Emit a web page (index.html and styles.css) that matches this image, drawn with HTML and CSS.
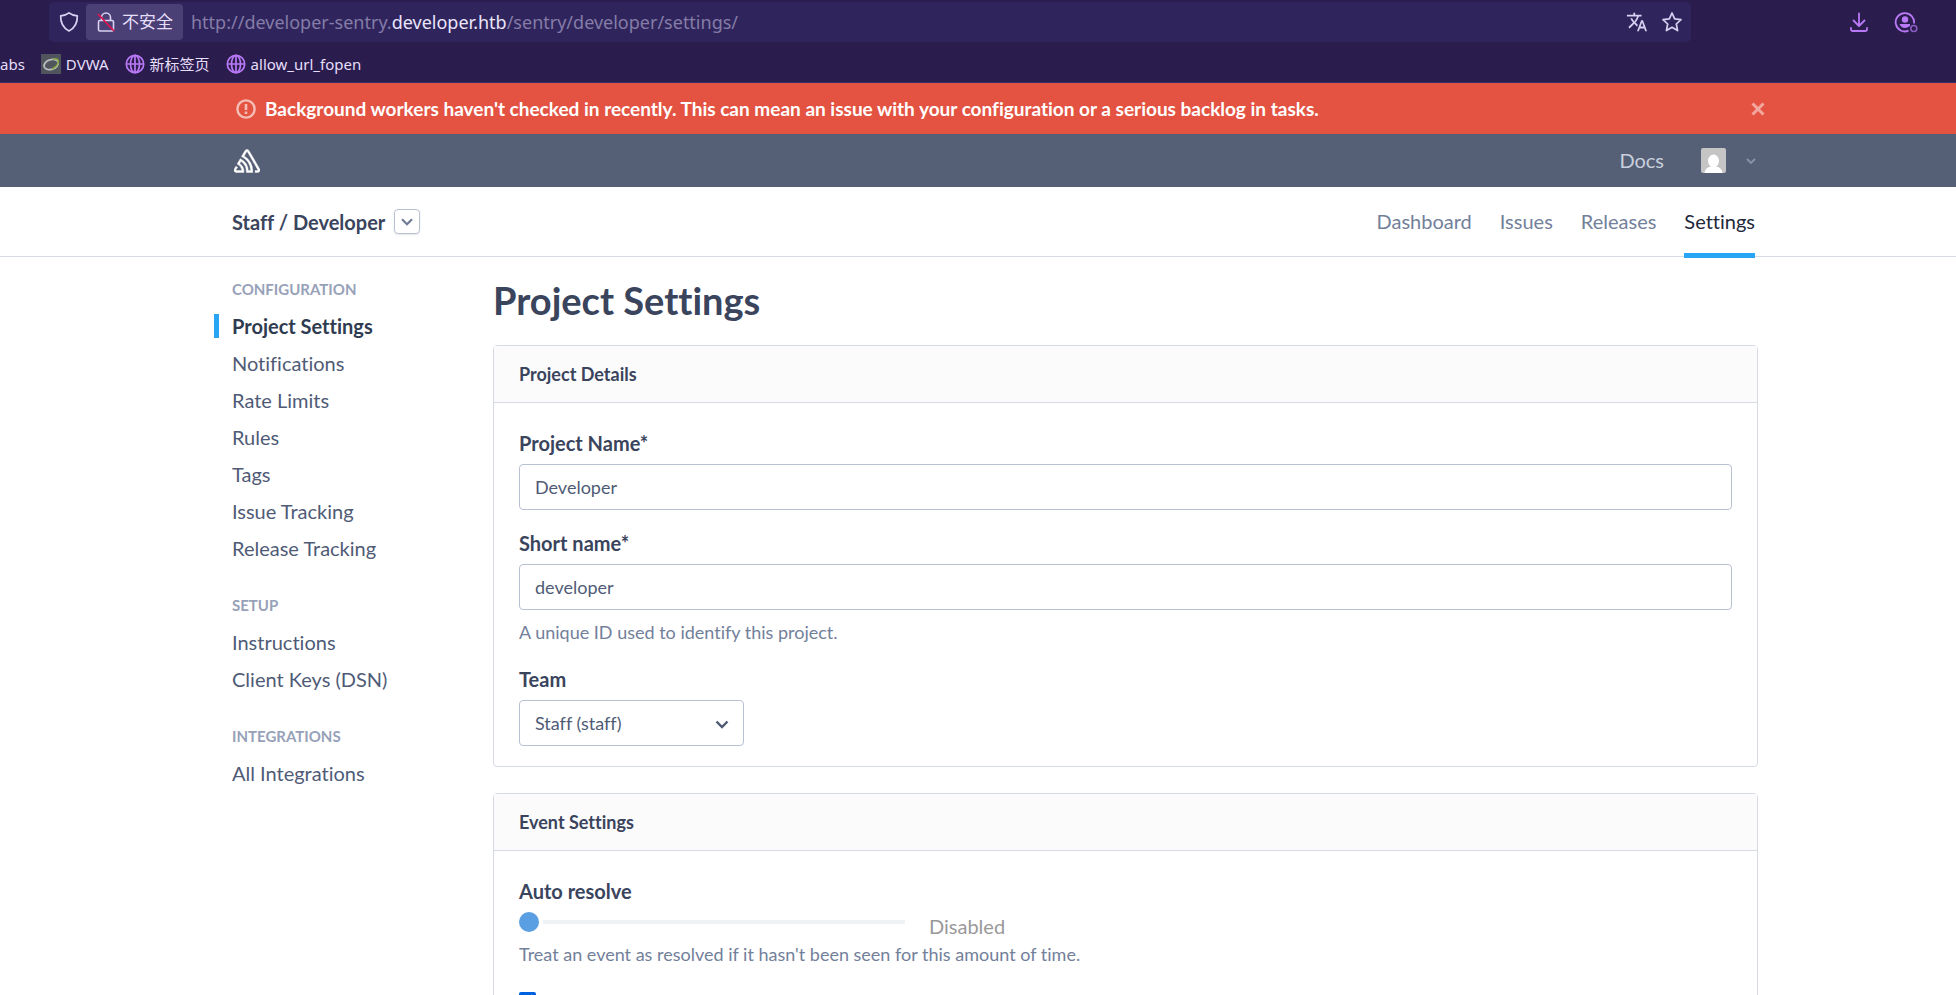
FILE: index.html
```html
<!DOCTYPE html>
<html lang="en">
<head>
<meta charset="utf-8">
<title>Project Settings</title>
<link rel="stylesheet" href="styles.css">
</head>
<body>
<div class="browser">
  <div class="toolbar">
    <div class="urlbar">
      <svg class="shield" width="20" height="22" viewBox="0 0 20 22"><path d="M10 1.800 Q13 4.300 18.300 4.800 Q18.800 15.500 10 20 Q1.200 15.500 1.700 4.800 Q7 4.300 10 1.800 Z" fill="none" stroke="#d9d0f2" stroke-width="1.700" stroke-linejoin="round"/></svg>
      <button class="insecure" type="button">
        <svg width="18" height="22" viewBox="0 0 18 22" fill="none"><path d="M4.500 9 V6.500 A4.500 4.500 0 0 1 13.500 6.500 V9 M3 9.500 H15 Q16.500 9.500 16.500 11 V18.500 Q16.500 20 15 20 H3 Q1.500 20 1.500 18.500 V11 Q1.500 9.500 3 9.500 Z" stroke="#d9d0f2" stroke-width="1.600"/><path d="M1 3 L17 20" stroke="#e0124f" stroke-width="1.800"/></svg>
        <span>不安全</span>
      </button>
      <span class="url">http://developer-sentry.<b>developer.htb</b>/sentry/developer/settings/</span>
      <button class="tool" type="button" aria-label="Translate"><svg width="22" height="22" viewBox="0 0 24 24" fill="#d9d0f2"><path d="M12.870 15.070l-2.540-2.510.03-.03A17.520 17.520 0 0 0 14.070 6H17V4h-7V2H8v2H1v2h11.170C11.500 7.920 10.440 9.750 9 11.350 8.070 10.320 7.300 9.190 6.690 8h-2c.73 1.630 1.730 3.170 2.980 4.560l-5.090 5.020L4 19l5-5 3.110 3.110.76-2.040zM18.500 10h-2L12 22h2l1.120-3h4.750L21 22h2l-4.500-12zm-2.620 7l1.620-4.330L19.120 17h-3.240z"/></svg></button>
      <button class="tool" type="button" aria-label="Bookmark"><svg width="22" height="22" viewBox="0 0 22 22"><path d="M11 2 L13.700 7.900 L20 8.600 L15.300 13 L16.600 19.600 L11 16.300 L5.400 19.600 L6.700 13 L2 8.600 L8.300 7.900 Z" fill="none" stroke="#d9d0f2" stroke-width="1.700" stroke-linejoin="round"/></svg></button>
    </div>
    <div class="actions">
      <button class="tool" type="button" aria-label="Downloads"><svg width="18" height="22" viewBox="0 0 18 22" fill="none" stroke="#b978f5" stroke-width="1.800" stroke-linecap="round" stroke-linejoin="round"><path d="M9 2.500 V14.500 M3.500 9.500 L9 15 L14.500 9.500 M1 17 V18.500 Q1 20 2.500 20 H15.500 Q17 20 17 18.500 V17"/></svg></button>
      <button class="tool" type="button" aria-label="Account"><svg width="24" height="22" viewBox="0 0 24 22" fill="none"><path d="M20 12.500 A9.200 9.200 0 1 0 14.500 19.700" stroke="#b978f5" stroke-width="1.800"/><circle cx="11" cy="8.500" r="3.200" fill="#b978f5"/><path d="M5.500 13 H16 V15 Q13 17 11 17 Q7 17 5.500 13 Z" fill="#b978f5"/><circle cx="19.800" cy="17.500" r="3" stroke="#8d5cc4" stroke-width="1.600"/></svg></button>
    </div>
  </div>
  <nav class="bookmarks">
    <a href="#">abs</a>
    <a href="#"><svg width="20" height="20" viewBox="0 0 20 20"><rect width="20" height="20" fill="#50545c"/><ellipse cx="10" cy="10.500" rx="7.300" ry="4.800" transform="rotate(-18 10 10)" fill="none" stroke="#b9bdbd" stroke-width="1.800"/><path d="M12 5 Q19 4 17 9.500 Q15 13.500 11 15" fill="none" stroke="#7fa23c" stroke-width="1.500"/></svg>DVWA</a>
    <a href="#"><svg width="20" height="20" viewBox="0 0 20 20" fill="none" stroke="#b978f5" stroke-width="1.700"><circle cx="10" cy="10" r="8.700"/><ellipse cx="10" cy="10" rx="4.500" ry="8.700"/><path d="M1 10 H19 M10 1 V19"/></svg>新标签页</a>
    <a href="#"><svg width="20" height="20" viewBox="0 0 20 20" fill="none" stroke="#b978f5" stroke-width="1.700"><circle cx="10" cy="10" r="8.700"/><ellipse cx="10" cy="10" rx="4.500" ry="8.700"/><path d="M1 10 H19 M10 1 V19"/></svg>allow_url_fopen</a>
  </nav>
</div>

<div class="alert band" role="alert">
  <svg width="20" height="20" viewBox="0 0 20 20" fill="none"><circle cx="10" cy="10" r="8.600" stroke="#f4bdb5" stroke-width="2.400"/><path d="M10 5 V11 M10 12.500 V15" stroke="#f4bdb5" stroke-width="2.600"/></svg>
  <strong>Background workers haven't checked in recently. This can mean an issue with your configuration or a serious backlog in tasks.</strong>
  <button type="button" class="close" aria-label="Close"><svg width="14" height="14" viewBox="0 0 14 14"><path d="M1.500 1.500 L12.500 12.500 M12.500 1.500 L1.500 12.500" stroke="#f2a89e" stroke-width="3"/></svg></button>
</div>

<header class="topnav band">
  <a href="#" class="logo" aria-label="Sentry"><svg width="26" height="26" viewBox="0 0 24 24" fill="#fff" stroke="#fff" stroke-width=".4"><path d="M13.910 2.505c-.873-1.448-2.972-1.448-3.844 0L6.904 7.920a15.478 15.478 0 0 1 8.530 12.811h-2.221A13.301 13.301 0 0 0 5.784 9.814l-2.926 5.060a7.650 7.650 0 0 1 4.435 5.848H2.194a.365.365 0 0 1-.298-.534l1.413-2.402a5.160 5.160 0 0 0-1.614-.913L.296 19.275a2.182 2.182 0 0 0 .812 2.999 2.240 2.240 0 0 0 1.086.288h6.983a9.322 9.322 0 0 0-3.845-8.318l1.110-1.922a11.470 11.470 0 0 1 4.950 10.240h5.915a17.242 17.242 0 0 0-7.885-15.280l2.244-3.845a.370.370 0 0 1 .504-.130c.255.140 9.750 16.708 9.928 16.900a.365.365 0 0 1-.327.543h-2.287c.029.612.029 1.223 0 1.831h2.297a2.206 2.206 0 0 0 1.922-3.310z"/></svg></a>
  <a href="#" class="docs">Docs</a>
  <button type="button" class="user" aria-label="Account menu">
    <svg width="25" height="25" viewBox="0 0 25 25"><rect width="25" height="25" rx="2" fill="#c5c5c5"/><ellipse cx="12.500" cy="13" rx="5.500" ry="6.500" fill="#fff"/><path d="M3.500 25 Q4 19.500 10 18.500 H15 Q21 19.500 21.500 25 Z" fill="#fff"/></svg>
    <svg width="10" height="6" viewBox="0 0 10 6"><path d="M1 1 L5 5 L9 1" fill="none" stroke="#8a93a6" stroke-width="1.800"/></svg>
  </button>
</header>

<div class="subnav band">
  <h2>Staff / Developer</h2>
  <button type="button" class="switch" aria-label="Switch project"><svg width="12" height="8" viewBox="0 0 12 8"><path d="M1 1.300 L6 6.300 L11 1.300" fill="none" stroke="#6f7b94" stroke-width="2.200"/></svg></button>
  <nav class="tabs">
    <a href="#">Dashboard</a>
    <a href="#">Issues</a>
    <a href="#">Releases</a>
    <a href="#" class="active">Settings</a>
  </nav>
</div>

<div class="page band">
  <nav class="sidebar">
    <h6>CONFIGURATION</h6>
    <ul>
      <li class="active"><a href="#">Project Settings</a></li>
      <li><a href="#">Notifications</a></li>
      <li><a href="#">Rate Limits</a></li>
      <li><a href="#">Rules</a></li>
      <li><a href="#">Tags</a></li>
      <li><a href="#">Issue Tracking</a></li>
      <li><a href="#">Release Tracking</a></li>
    </ul>
    <h6>SETUP</h6>
    <ul>
      <li><a href="#">Instructions</a></li>
      <li><a href="#">Client Keys (DSN)</a></li>
    </ul>
    <h6>INTEGRATIONS</h6>
    <ul>
      <li><a href="#">All Integrations</a></li>
    </ul>
  </nav>
  <main>
    <h1>Project Settings</h1>
    <section class="panel">
      <h3>Project Details</h3>
      <div class="body">
        <div class="field">
          <label for="name">Project Name*</label>
          <input id="name" type="text" value="Developer">
        </div>
        <div class="field">
          <label for="slug">Short name*</label>
          <input id="slug" type="text" value="developer">
          <p class="help">A unique ID used to identify this project.</p>
        </div>
        <div class="field">
          <label for="team">Team</label>
          <span class="select">
            <select id="team"><option>Staff (staff)</option></select>
            <svg width="14" height="9" viewBox="0 0 14 9"><path d="M1.500 1.500 L7 7 L12.500 1.500" fill="none" stroke="#4e5a73" stroke-width="2.400"/></svg>
          </span>
        </div>
      </div>
    </section>
    <section class="panel">
      <h3>Event Settings</h3>
      <div class="body">
        <div class="field">
          <label for="age">Auto resolve</label>
          <div class="slider">
            <input id="age" type="range" min="0" max="100" value="0">
            <output for="age">Disabled</output>
          </div>
          <p class="help">Treat an event as resolved if it hasn't been seen for this amount of time.</p>
        </div>
        <div class="check"><input id="scrub" type="checkbox" checked aria-label="Data scrubber"></div>
      </div>
    </section>
  </main>
</div>
</body>
</html>
```
FILE: styles.css
```css
* { box-sizing: border-box; }
html { overflow: hidden; }
body {
  margin: 0;
  height: 100vh;
  overflow: hidden;
  background: #fff;
  color: #4f5b76;
  font: 20px/28px Lato, "Noto Sans CJK SC", sans-serif;
  font-variant-ligatures: none;
}
a { color: inherit; text-decoration: none; }
button { border: 0; padding: 0; background: none; color: inherit; font: inherit; display: flex; align-items: center; }
h1, h2, h3, h6, p, ul { margin: 0; padding: 0; }
ul { list-style: none; }
svg { flex: none; display: block; }

.browser {
  height: 83px;
  background: #2a1d4e;
  border-bottom: 1px solid #373070;
  color: #e6dffa;
  font-family: "Noto Sans", "Noto Sans CJK SC", sans-serif;
}
.toolbar { display: flex; padding: 2px 38px 0 49px; }
.urlbar {
  flex: 1;
  display: flex;
  align-items: center;
  height: 40px;
  padding: 0 8px 0 10px;
  border-radius: 5px;
  background: #2f255c;
}
.insecure {
  gap: 7px;
  height: 36px;
  margin: 0 8px 0 7px;
  padding: 0 10px 0 11px;
  border-radius: 4px;
  background: #4b4075;
  font-size: 17px;
}
.url { flex: 1; color: #857ca8; font-size: 18px; white-space: nowrap; }
.url b { color: #ebe5fc; font-weight: 400; }
.urlbar .tool { margin-left: 13px; }
.actions { display: flex; align-items: center; gap: 26px; margin-left: 159px; }
.bookmarks { display: flex; gap: 16px; height: 40px; align-items: center; padding-top: 4px; font-size: 15px; }
.bookmarks a { display: flex; align-items: center; gap: 5px; }

.band { padding-left: 232px; padding-right: 201px; display: flex; align-items: center; }

.alert { gap: 9px; height: 51px; padding-left: 236px; padding-right: 191px; background: #e45241; color: #fff; font-size: 19px; }
.close { margin-left: auto; }

.topnav { height: 53px; padding-right: 200px; background: #556077; color: #c9d0dd; }
.logo { margin-left: 2px; }
.docs { margin-left: auto; padding-bottom: 2px; }
.user { gap: 20px; margin-left: 37px; }

.subnav { height: 70px; border-bottom: 1px solid #d6dae5; }
.subnav h2 { color: #3a445d; font-size: 20px; }
.switch {
  justify-content: center;
  width: 26px;
  height: 25px;
  margin-left: 9px;
  border: 1px solid #b9c0d1;
  border-radius: 4px;
  box-shadow: 0 1px 2px rgba(0, 0, 0, .1);
}
.tabs { display: flex; gap: 28px; margin-left: auto; align-self: stretch; color: #72809a; }
.tabs a { line-height: 68px; height: 71px; }
.tabs .active { color: #22283a; border-bottom: 5px solid #29a5f6; }

.page { align-items: flex-start; padding-right: 198px; }
.sidebar { width: 261px; flex: none; padding-top: 17px; }
.sidebar h6 { color: #97a1b8; font-size: 15px; line-height: 30px; font-weight: 700; }
.sidebar ul { padding: 4px 0 23px; }
.sidebar a { display: block; line-height: 37px; }
.sidebar .active { position: relative; color: #2f3b50; font-weight: 700; }
.sidebar .active::before {
  content: "";
  position: absolute;
  left: -18px;
  top: 6px;
  width: 5px;
  height: 24px;
  background: #29a5f6;
}

main { flex: 1; padding-top: 19px; color: #3a445d; }
h1 { font-size: 38px; line-height: 48px; }
.panel { margin: 21px 0 26px; border: 1px solid #d6dae5; border-radius: 4px; }
.panel h3 { padding: 0 25px; border-bottom: 1px solid #d6dae5; background: #fbfbfc; font-size: 18px; line-height: 56px; }
.body { padding: 25px 25px 20px; }
.field { margin-bottom: 18px; }
.field:last-child { margin-bottom: 0; }
.field label { display: block; font-weight: 700; line-height: 30px; margin-bottom: 6px; }
.field input[type="text"], .field select {
  appearance: none;
  display: block;
  width: 100%;
  height: 46px;
  padding: 0 15px;
  border: 1px solid #b9c0d1;
  border-radius: 4px;
  background: #fff;
  color: #4f5b76;
  font: 18px Lato, sans-serif;
  font-variant-ligatures: none;
}
.select { display: block; position: relative; width: 225px; }
.select svg { position: absolute; right: 15px; top: 20px; pointer-events: none; }
.help { color: #72809a; font-size: 18px; }
input + .help { margin-top: 8px; }
.slider { display: flex; align-items: flex-start; gap: 24px; }
.slider input { appearance: none; width: 386px; height: 20px; margin: 0; background: linear-gradient(#f0f1f4, #f0f1f4) right center / 362px 4px no-repeat; }
.slider input::-webkit-slider-thumb { appearance: none; width: 20px; height: 20px; border-radius: 50%; background: #5b9fe3; }
.slider output { color: #999; }
.check { padding-top: 6px; }
.check input { display: block; width: 17px; height: 17px; margin: 0; accent-color: #0061e0; }
```
